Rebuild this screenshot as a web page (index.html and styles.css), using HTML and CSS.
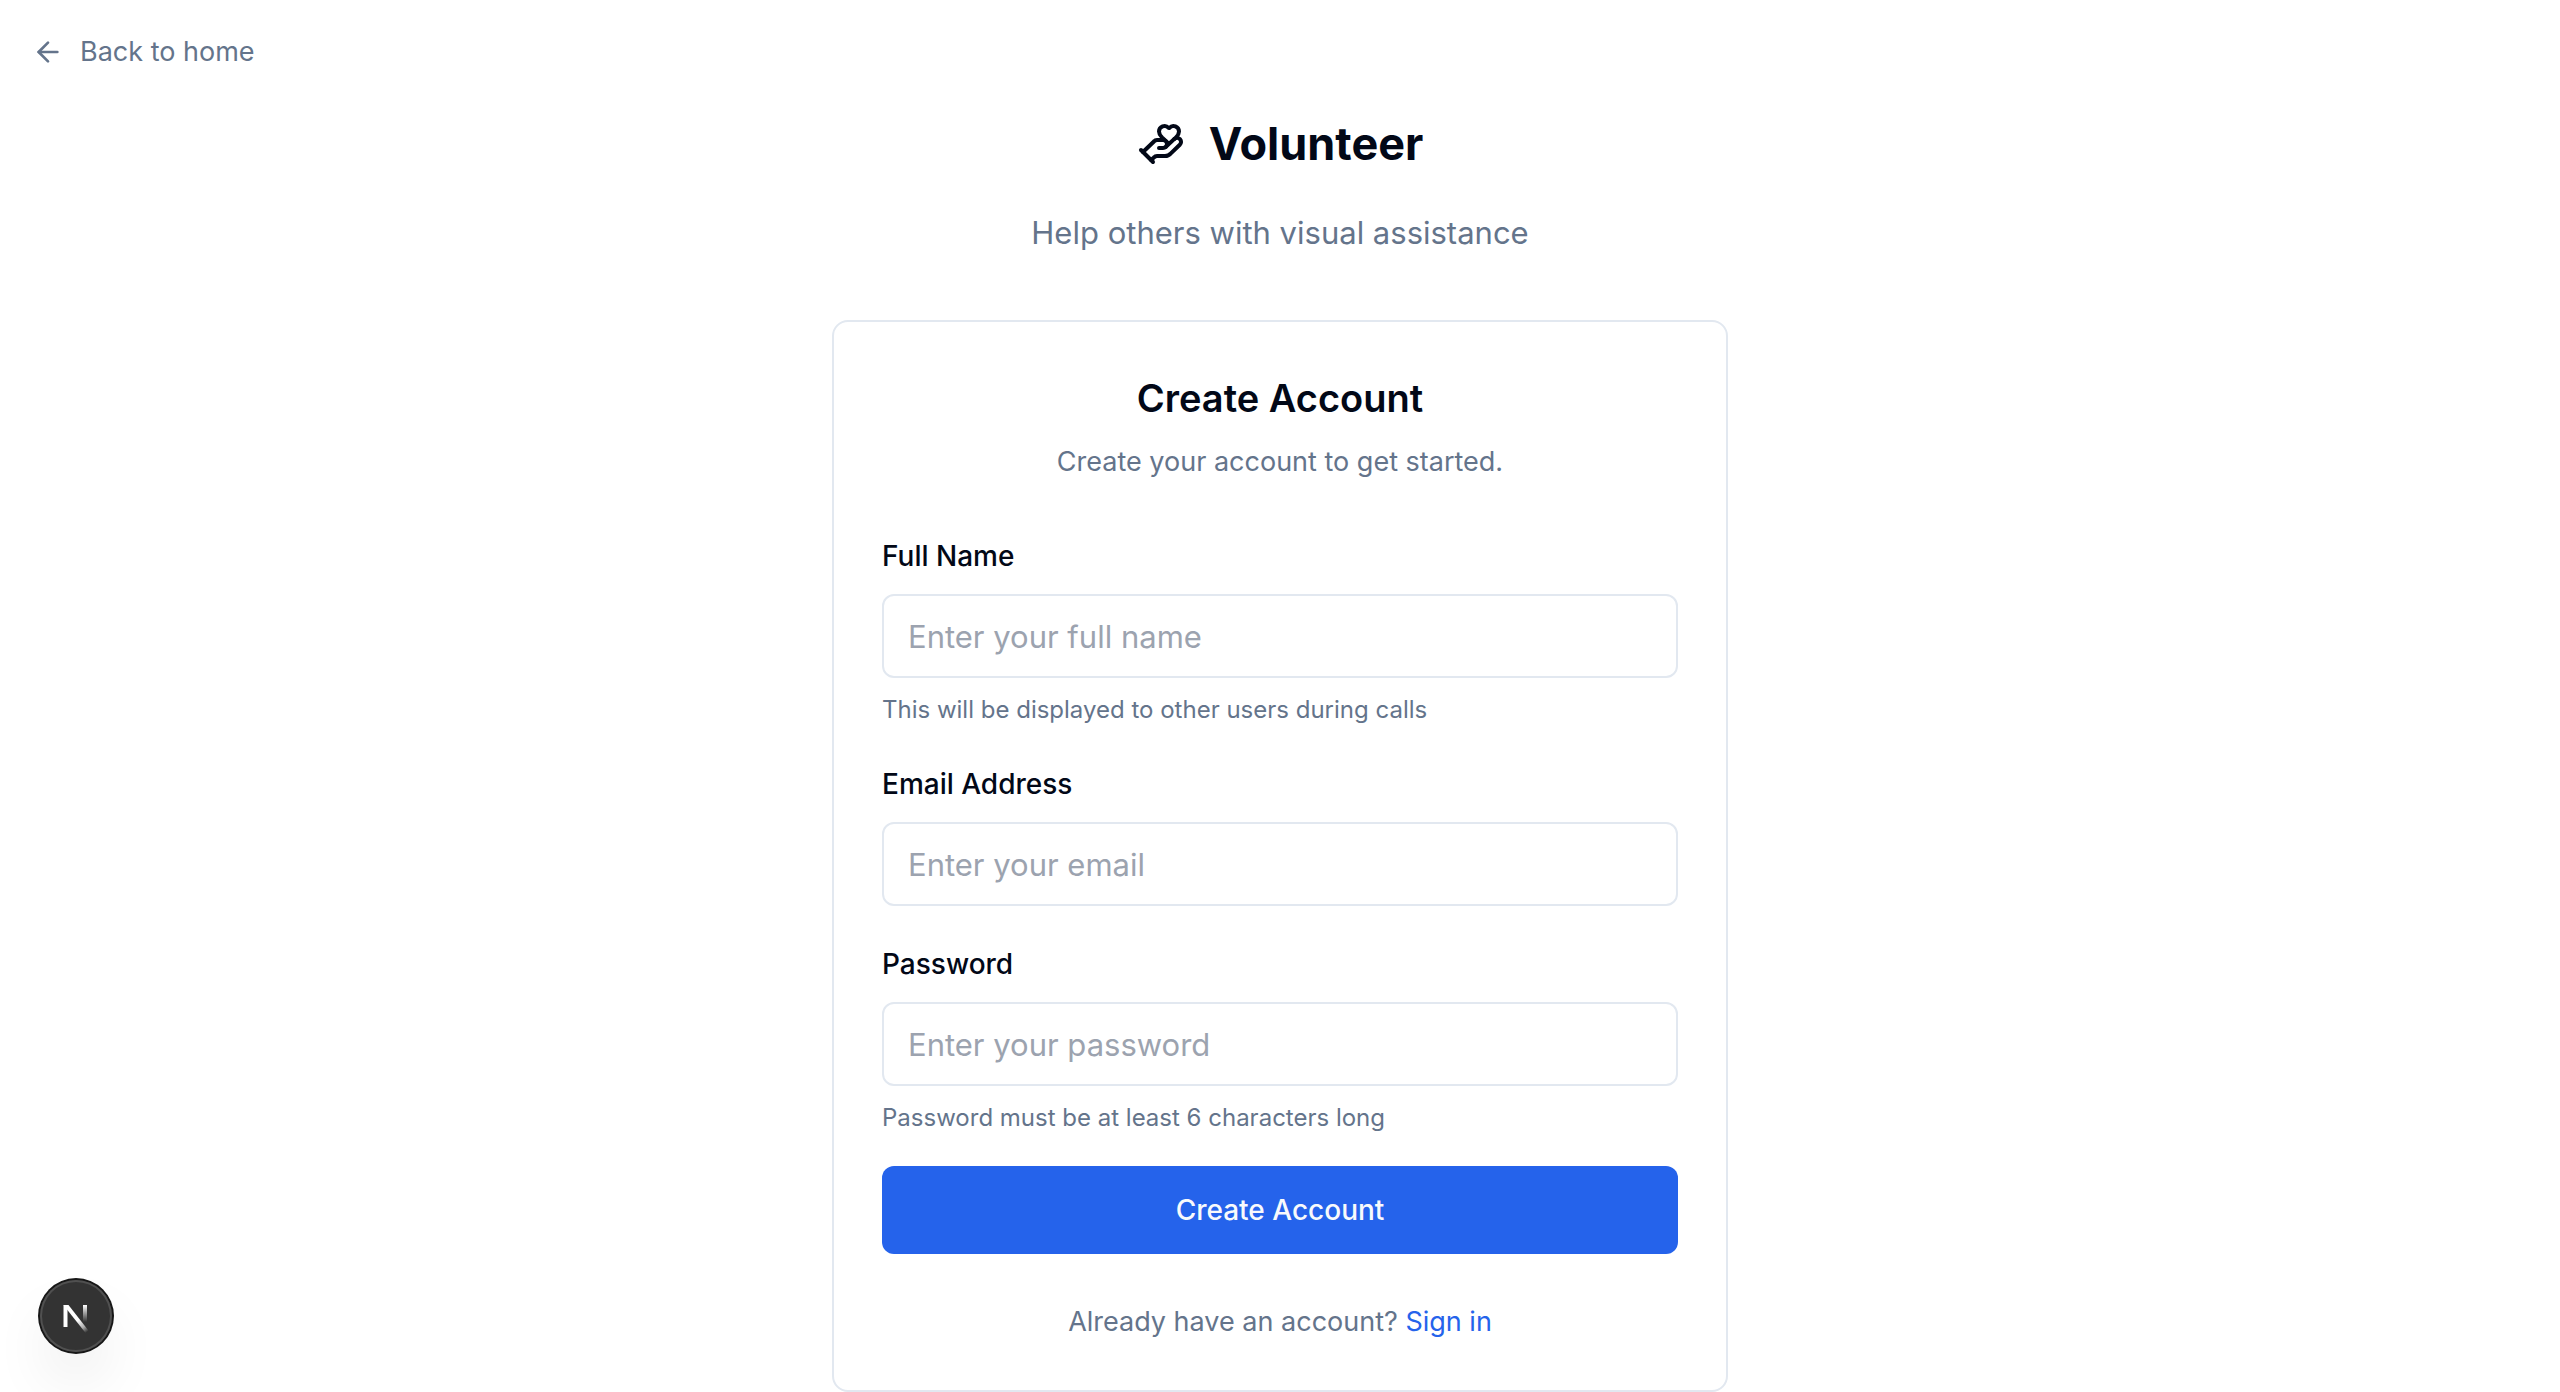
FILE: index.html
```html
<!DOCTYPE html>
<html lang="en">
<head>
<meta charset="utf-8">
<meta name="viewport" content="width=device-width, initial-scale=1">
<title>Volunteer – Create Account</title>
<link rel="stylesheet" href="styles.css">
</head>
<body>
<nav class="topbar">
  <a class="back-link" href="#">
    <svg class="back-icon" viewBox="0 0 24 24" aria-hidden="true"><path d="m12 19-7-7 7-7"/><path d="M19 12H5"/></svg>
    <span>Back to home</span>
  </a>
</nav>
<main class="page">
  <header class="brand">
    <h1 class="brand-name">
      <svg class="brand-icon" viewBox="0 0 24 24" aria-hidden="true"><path d="M11 14h2a2 2 0 0 0 0-4h-3c-.6 0-1.1.2-1.4.6L3 16"/><path d="m14.45 13.39 5.05-4.694C20.196 8 21 6.85 21 5.75a2.75 2.75 0 0 0-4.797-1.837.276.276 0 0 1-.406 0A2.75 2.75 0 0 0 11 5.75c0 1.2.802 2.248 1.5 2.946L16 11.95"/><path d="m2 15 6 6"/><path d="m7 20 1.6-1.4c.3-.4.8-.6 1.4-.6h4c1.1 0 2.1-.4 2.8-1.2l4.6-4.4a1 1 0 0 0-2.75-2.91"/></svg>
      <span>Volunteer</span>
    </h1>
    <p class="tagline">Help others with visual assistance</p>
  </header>
  <section class="card">
    <header class="card-header">
      <h2 class="card-title">Create Account</h2>
      <p class="card-text">Create your account to get started.</p>
    </header>
    <form class="form">
      <div class="fields">
        <div class="field">
          <label for="name">Full Name</label>
          <input id="name" type="text" placeholder="Enter your full name">
          <p class="hint">This will be displayed to other users during calls</p>
        </div>
        <div class="field">
          <label for="email">Email Address</label>
          <input id="email" type="email" placeholder="Enter your email">
        </div>
        <div class="field">
          <label for="password">Password</label>
          <input id="password" type="password" placeholder="Enter your password">
          <p class="hint">Password must be at least 6 characters long</p>
        </div>
      </div>
      <button class="submit" type="submit">Create Account</button>
    </form>
    <p class="signin">Already have an account? <a href="#">Sign in</a></p>
  </section>
</main>
<button class="dev-badge" type="button" aria-label="Open Next.js Dev Tools">
  <svg class="dev-logo" viewBox="0 0 40 40" fill="none" aria-hidden="true">
    <defs>
      <linearGradient id="fade-diagonal" gradientUnits="userSpaceOnUse" x1="22" y1="24" x2="31" y2="36"><stop stop-color="#fff"/><stop offset="0.6" stop-color="#fff" stop-opacity="0.6"/><stop offset="1" stop-color="#fff" stop-opacity="0"/></linearGradient>
      <linearGradient id="fade-stem" gradientUnits="userSpaceOnUse" x1="29" y1="9" x2="29" y2="26"><stop stop-color="#fff"/><stop offset="1" stop-color="#fff" stop-opacity="0"/></linearGradient>
    </defs>
    <path d="M7.500 9h4v22h-4z" fill="#fff"/>
    <path d="M7.500 9h5L33 35.200 30 37.500 9 11z" fill="url(#fade-diagonal)"/>
    <path d="M27 9h4v17h-4z" fill="url(#fade-stem)"/>
  </svg>
</button>
</body>
</html>
```
FILE: styles.css
```css
* {
  box-sizing: border-box;
}

body {
  margin: 0;
  background: #fff;
  color: #020817;
  font-family: Inter, "Liberation Sans", sans-serif;
  font-size: 27px;
  line-height: 40px;
}

h1, h2, p {
  margin: 0;
}

a {
  color: #2563eb;
  text-decoration: none;
}

svg {
  flex: none;
}

.topbar {
  display: flex;
  padding: 32px 32px 0;
}

.back-link {
  display: flex;
  align-items: center;
  gap: 16px;
  color: #64748b;
}

.back-icon,
.brand-icon {
  fill: none;
  stroke: currentColor;
  stroke-width: 2;
  stroke-linecap: round;
  stroke-linejoin: round;
}

.back-icon {
  width: 32px;
  height: 32px;
}

.page {
  display: flex;
  flex-direction: column;
  gap: 63px;
  max-width: 896px;
  margin: 0 auto;
  padding-top: 40px;
}

.brand {
  display: flex;
  flex-direction: column;
  align-items: center;
  gap: 33px;
}

.brand-name {
  display: flex;
  align-items: center;
  gap: 24px;
  font-size: 45px;
  font-weight: 700;
  line-height: 64px;
}

.brand-icon {
  width: 48px;
  height: 48px;
}

.tagline {
  color: #64748b;
  font-size: 31px;
  line-height: 48px;
}

.card {
  padding: 48px;
  border: 2px solid #e2e8f0;
  border-radius: 16px;
}

.card-header {
  display: flex;
  flex-direction: column;
  align-items: center;
  gap: 16px;
  margin-bottom: 52px;
}

.card-title {
  font-size: 38px;
  font-weight: 600;
  line-height: 56px;
}

.card-text {
  color: #64748b;
}

.form {
  display: flex;
  flex-direction: column;
  gap: 32px;
}

.fields {
  display: flex;
  flex-direction: column;
  gap: 36px;
}

.field {
  display: flex;
  flex-direction: column;
  gap: 16px;
}

.field label {
  font-size: 28px;
  font-weight: 500;
  line-height: 44px;
}

.field input {
  width: 100%;
  height: 84px;
  padding: 16px 24px;
  border: 2px solid #e2e8f0;
  border-radius: 12px;
  background: #fff;
  color: inherit;
  font: inherit;
  font-size: 31px;
}

.field input::placeholder {
  color: #9ca3af;
  opacity: 1;
}

.hint {
  color: #64748b;
  font-size: 24px;
  line-height: 32px;
}

.submit {
  height: 88px;
  border: 0;
  border-radius: 12px;
  background: #2563eb;
  color: #f8fafc;
  font: inherit;
  font-size: 28px;
  font-weight: 500;
}

.signin {
  margin-top: 48px;
  color: #64748b;
  text-align: center;
}

.dev-badge {
  position: fixed;
  bottom: 40px;
  left: 40px;
  display: flex;
  align-items: center;
  justify-content: center;
  width: 72px;
  height: 72px;
  padding: 0;
  border: 0;
  border-radius: 50%;
  background: #333;
  box-shadow: 0 0 0 2px #171717, inset 0 0 0 2px #505050, 0 32px 64px -16px rgb(0 0 0 / 20%);
}

.dev-logo {
  width: 40px;
  height: 40px;
}
```
